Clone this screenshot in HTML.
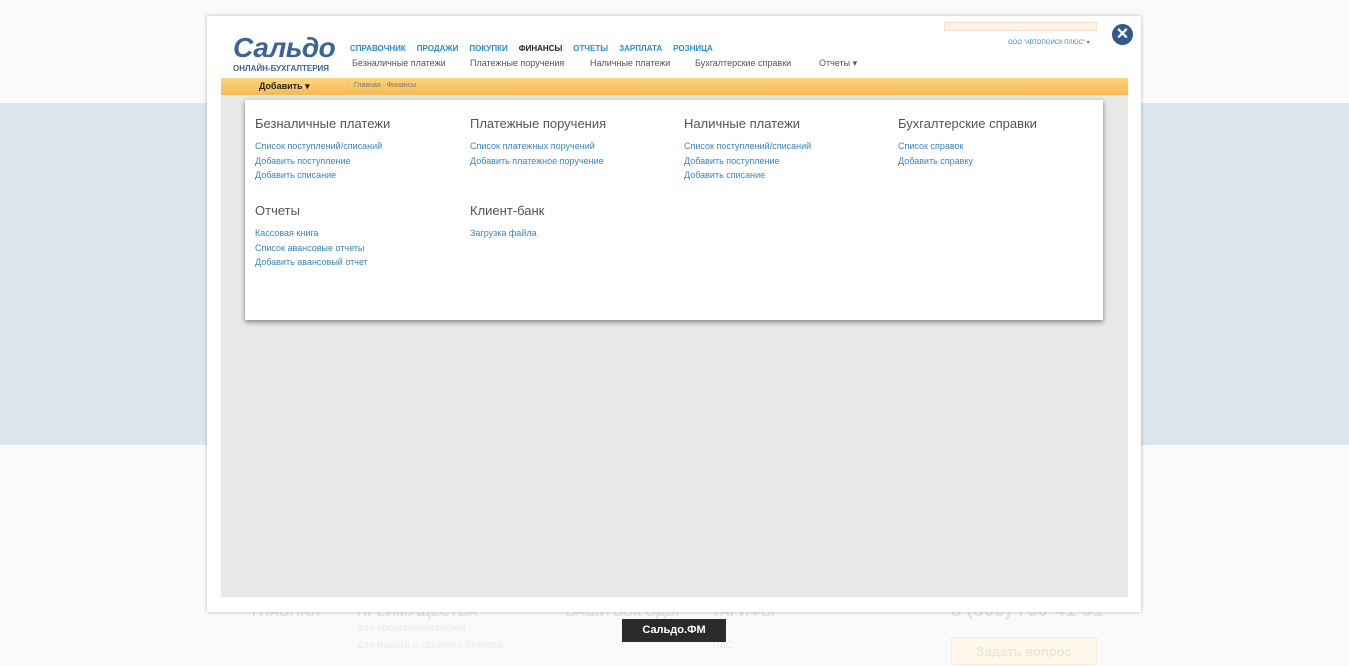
<!DOCTYPE html>
<html><head><meta charset="utf-8"><style>
*{margin:0;padding:0;box-sizing:border-box}
body{width:1349px;height:661px;overflow:hidden;position:relative;background:#fafafa;font-family:"Liberation Sans",sans-serif}
.abs{position:absolute}
.band{left:0;top:103px;width:1349px;height:342px;background:#dbe6ee}
.modal{left:207px;top:16px;width:934px;height:596px;background:#fff;box-shadow:0 0 4px rgba(0,0,0,.25)}
.gray{left:221px;top:95px;width:907px;height:502px;background:#e8e8e6}
.bar{left:221px;top:78px;width:907px;height:17px;background:linear-gradient(#fdd57f,#f7b955)}
.panel{left:245px;top:100px;width:858px;height:220px;background:#fff;box-shadow:0 2px 5px rgba(0,0,0,.45)}
.h{font-size:13px;color:#555;font-weight:300}
.l{font-size:9px;color:#3a86bd;line-height:14.5px}
.top a{font-size:8px;font-weight:bold;color:#2a8fc8;text-decoration:none;margin-right:11px}
.sub span{font-size:9px;color:#555;position:absolute}
.foot{color:#dfe7f0;font-weight:bold;font-size:14px}
.fs{color:#eaeaea;font-size:10px}
</style></head><body>
<div class="abs band"></div>
<div class="abs foot" style="left:252px;top:603px">ГЛАВНАЯ</div>
<div class="abs foot" style="left:357px;top:603px">ПРЕИМУЩЕСТВА</div>
<div class="abs foot" style="left:566px;top:603px">ВАШИ ВЫГОДЫ</div>
<div class="abs foot" style="left:712px;top:603px">ТАРИФЫ</div>
<div class="abs foot" style="left:951px;top:600px;font-size:19px">8 (800) 700-41-91</div>
<div class="abs fs" style="left:357px;top:623px">для предпринимателей</div>
<div class="abs fs" style="left:357px;top:640px">для малого и среднего бизнеса</div>
<div class="abs fs" style="left:712px;top:640px">НДС</div>
<div class="abs" style="left:951px;top:637px;width:146px;height:28px;background:#fff8ec;border:1px solid #f8ecd6;color:#f0e6d6;font-weight:bold;font-size:13px;text-align:center;line-height:28px">Задать вопрос</div>
<div class="abs modal"></div>
<div class="abs" style="left:944px;top:22px;width:153px;height:9px;background:#fdf3e6;border:1px solid #f5e3c8"></div>
<div class="abs" style="left:233px;top:32px;font-size:28px;font-weight:bold;font-style:italic;color:#3d6592;letter-spacing:-0.5px">Сальдо</div>
<div class="abs" style="left:233px;top:64px;font-size:8px;font-weight:bold;color:#3d6592">ОНЛАЙН-БУХГАЛТЕРИЯ</div>
<div class="abs top" style="left:350px;top:38px;white-space:nowrap"><a>СПРАВОЧНИК</a><a>ПРОДАЖИ</a><a>ПОКУПКИ</a><a style="color:#222">ФИНАНСЫ</a><a>ОТЧЕТЫ</a><a>ЗАРПЛАТА</a><a>РОЗНИЦА</a></div>
<div class="sub">
<span style="left:352px;top:58px">Безналичные платежи</span>
<span style="left:470px;top:58px">Платежные поручения</span>
<span style="left:590px;top:58px">Наличные платежи</span>
<span style="left:695px;top:58px">Бухгалтерские справки</span>
<span style="left:819px;top:58px">Отчеты ▾</span>
</div>
<div class="abs" style="left:1008px;top:39px;font-size:6px;color:#3a86bd">ООО "АВТОПОИСК ПЛЮС" ▾</div>
<div class="abs" style="left:1112px;top:24px;width:21px;height:21px;border-radius:50%;background:#2f5a8b;color:#fff;font-size:16px;font-weight:bold;text-align:center;line-height:21px">✕</div>
<div class="abs gray"></div>
<div class="abs bar"></div>
<div class="abs" style="left:259px;top:81px;font-size:9px;font-weight:bold;color:#222">Добавить ▾</div>
<div class="abs" style="left:347px;top:80px;height:12px;border-left:1px solid #f0c070"></div>
<div class="abs" style="left:354px;top:82px;font-size:7px;color:#777">Главная - Финансы</div>
<div class="abs panel"></div>
<div class="abs h" style="left:255px;top:116px">Безналичные платежи</div>
<div class="abs l" style="left:255px;top:139px">Список поступлений/списаний<br>Добавить поступление<br>Добавить списание</div>
<div class="abs h" style="left:470px;top:116px">Платежные поручения</div>
<div class="abs l" style="left:470px;top:139px">Список платежных поручений<br>Добавить платежное поручение</div>
<div class="abs h" style="left:684px;top:116px">Наличные платежи</div>
<div class="abs l" style="left:684px;top:139px">Список поступлений/списаний<br>Добавить поступление<br>Добавить списание</div>
<div class="abs h" style="left:898px;top:116px">Бухгалтерские справки</div>
<div class="abs l" style="left:898px;top:139px">Список справок<br>Добавить справку</div>
<div class="abs h" style="left:255px;top:203px">Отчеты</div>
<div class="abs l" style="left:255px;top:226px">Кассовая книга<br>Список авансовые отчеты<br>Добавить авансовый отчет</div>
<div class="abs h" style="left:470px;top:203px">Клиент-банк</div>
<div class="abs l" style="left:470px;top:226px">Загрузка файла</div>
<div class="abs" style="left:622px;top:619px;width:104px;height:23px;background:#2b2b2b;color:#fff;font-size:11px;font-weight:bold;text-align:center;line-height:23px">Сальдо.ФМ</div>
</body></html>
